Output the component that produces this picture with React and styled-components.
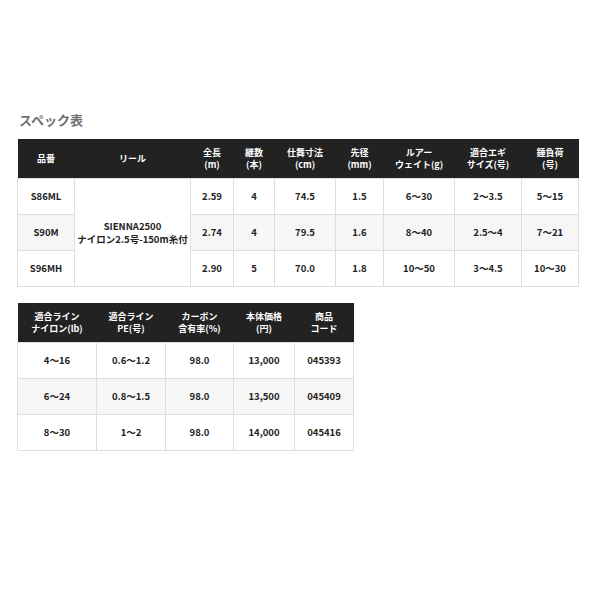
import React from 'react';
import styled, { createGlobalStyle } from 'styled-components';

const GlobalStyle = createGlobalStyle`
  html, body {
    margin: 0;
    padding: 0;
    background: #fff;
  }
  body {
    font-family: "Noto Sans CJK JP", "Noto Sans", sans-serif;
    color: #222;
  }
`;

const specRows = [
  { code: 'S86ML', length: '2.59', pieces: '4', closed: '74.5', tip: '1.5', lure: '6〜30', egi: '2〜3.5', sinker: '5〜15' },
  { code: 'S90M', length: '2.74', pieces: '4', closed: '79.5', tip: '1.6', lure: '8〜40', egi: '2.5〜4', sinker: '7〜21' },
  { code: 'S96MH', length: '2.90', pieces: '5', closed: '70.0', tip: '1.8', lure: '10〜50', egi: '3〜4.5', sinker: '10〜30' },
];

const lineRows = [
  { nylon: '4〜16', pe: '0.6〜1.2', carbon: '98.0', price: '13,000', jan: '045393' },
  { nylon: '6〜24', pe: '0.8〜1.5', carbon: '98.0', price: '13,500', jan: '045409' },
  { nylon: '8〜30', pe: '1〜2', carbon: '98.0', price: '14,000', jan: '045416' },
];

const specCols = [57, 116, 43, 41, 61, 48, 71, 67, 57];
const lineCols = [79, 69, 68, 61, 59];

export default function App() {
  return (
    <Page>
      <GlobalStyle />
      <Title>スペック表</Title>
      <Table>
        <colgroup>
          {specCols.map((w, i) => (
            <col key={i} style={{ width: w }} />
          ))}
        </colgroup>
        <thead>
          <tr>
            <Th>品番</Th>
            <Th>リール</Th>
            <Th>全長<br />(m)</Th>
            <Th>継数<br />(本)</Th>
            <Th>仕舞寸法<br />(cm)</Th>
            <Th>先径<br />(mm)</Th>
            <Th>ルアー<br />ウェイト(g)</Th>
            <Th>適合エギ<br />サイズ(号)</Th>
            <Th>錘負荷<br />(号)</Th>
          </tr>
        </thead>
        <tbody>
          {specRows.map((r, i) => (
            <Row key={r.code} $alt={i === 1}>
              <Td>{r.code}</Td>
              {i === 0 && (
                <ReelCell rowSpan={3}>
                  SIENNA2500
                  <br />
                  ナイロン2.5号-150m糸付
                </ReelCell>
              )}
              <Td>{r.length}</Td>
              <Td>{r.pieces}</Td>
              <Td>{r.closed}</Td>
              <Td>{r.tip}</Td>
              <Td>{r.lure}</Td>
              <Td>{r.egi}</Td>
              <Td>{r.sinker}</Td>
            </Row>
          ))}
        </tbody>
      </Table>

      <Table $second>
        <colgroup>
          {lineCols.map((w, i) => (
            <col key={i} style={{ width: w }} />
          ))}
        </colgroup>
        <thead>
          <tr>
            <Th>適合ライン<br />ナイロン(lb)</Th>
            <Th>適合ライン<br />PE(号)</Th>
            <Th>カーボン<br />含有率(%)</Th>
            <Th>本体価格<br />(円)</Th>
            <Th>商品<br />コード</Th>
          </tr>
        </thead>
        <tbody>
          {lineRows.map((r, i) => (
            <Row key={r.jan} $alt={i === 1}>
              <Td>{r.nylon}</Td>
              <Td>{r.pe}</Td>
              <Td>{r.carbon}</Td>
              <Td>{r.price}</Td>
              <Td>{r.jan}</Td>
            </Row>
          ))}
        </tbody>
      </Table>
    </Page>
  );
}

const Page = styled.div`
  padding: 110px 0 0 17px;
`;

const Title = styled.h2`
  margin: 0 0 9px 2px;
  font-size: 13px;
  line-height: 20px;
  font-weight: 700;
  color: #707070;
`;

const Table = styled.table`
  border-collapse: collapse;
  table-layout: fixed;
  margin-top: ${(p) => (p.$second ? '16px' : '0')};
  font-size: 9.5px;
  font-weight: 700;
`;

const Th = styled.th`
  background: #222;
  color: #fff;
  height: 39px;
  padding: 0;
  text-align: center;
  vertical-align: middle;
  line-height: 12px;
  font-size: 9px;
  font-weight: 700;
  border: none;
`;

const Row = styled.tr`
  background: ${(p) => (p.$alt ? '#f6f6f6' : '#fff')};
  height: 36px;
`;

const Td = styled.td`
  border: 1px solid #dedede;
  padding: 0;
  text-align: center;
  vertical-align: middle;
  color: #222;
  line-height: 13px;
`;

const ReelCell = styled(Td)`
  background: #fff;
`;
